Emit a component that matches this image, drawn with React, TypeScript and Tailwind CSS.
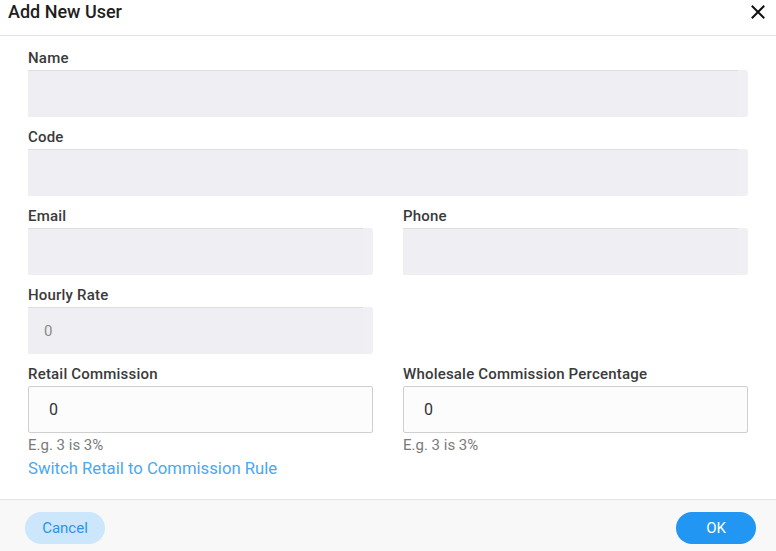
import React from "react";

function Label({ children }: { children: React.ReactNode }) {
  return (
    <div className="h-[20px] leading-[20px] text-[15px] tracking-[0.2px] font-medium text-[#3a3a3a] mb-[2px]">
      {children}
    </div>
  );
}

function Disabled({ value }: { value?: string }) {
  return (
    <div className="h-[47px] rounded-[3px] bg-[#f0f0f4] flex">
      <div className="w-[calc(100%-10px)] h-full border-t border-[#dedee2] bg-[#efeff3] flex items-center pl-[16px] text-[15px] text-[#8a8a8a]">
        {value}
      </div>
    </div>
  );
}

function Editable({ value }: { value: string }) {
  return (
    <div className="h-[47px] rounded-[2px] border border-[#cfcfcf] bg-[#fcfcfc] flex items-center pl-[20px] text-[16px] text-[#333333]">
      {value}
    </div>
  );
}

export default function App() {
  return (
    <div className="w-[776px] h-[551px] bg-white flex flex-col overflow-hidden font-['Roboto','Liberation_Sans',sans-serif]">
      <div className="h-[36px] shrink-0 border-b border-[#e3e3e3] flex items-start justify-between pl-[8px] pr-[11px]">
        <div className="leading-[24px] text-[18px] font-medium text-[#1e1e1e]">Add New User</div>
        <svg width="14" height="14" viewBox="0 0 14 14" className="mt-[5px]">
          <path d="M1.5 1.5 L12.5 12.5 M12.5 1.5 L1.5 12.5" stroke="#111" strokeWidth="2" strokeLinecap="square" />
        </svg>
      </div>

      <div className="flex-1 px-[28px] pt-[12px]">
        <div className="mb-[10px]">
          <Label>Name</Label>
          <Disabled />
        </div>
        <div className="mb-[10px]">
          <Label>Code</Label>
          <Disabled />
        </div>
        <div className="grid grid-cols-2 gap-x-[30px] mb-[10px]">
          <div>
            <Label>Email</Label>
            <Disabled />
          </div>
          <div>
            <Label>Phone</Label>
            <Disabled />
          </div>
        </div>
        <div className="grid grid-cols-2 gap-x-[30px] mb-[10px]">
          <div>
            <Label>Hourly Rate</Label>
            <Disabled value="0" />
          </div>
        </div>
        <div className="grid grid-cols-2 gap-x-[30px]">
          <div>
            <Label>Retail Commission</Label>
            <Editable value="0" />
            <div className="mt-[2px] h-[20px] leading-[20px] text-[15px] text-[#7a7a7a]">E.g. 3 is 3%</div>
            <div className="mt-[3px] leading-[22px] text-[16.7px] text-[#4aa7f2] cursor-pointer">
              Switch Retail to Commission Rule
            </div>
          </div>
          <div>
            <Label>Wholesale Commission Percentage</Label>
            <Editable value="0" />
            <div className="mt-[2px] h-[20px] leading-[20px] text-[15px] text-[#7a7a7a]">E.g. 3 is 3%</div>
          </div>
        </div>
      </div>

      <div className="h-[52px] shrink-0 border-t border-[#e3e3e3] bg-[#f8f8f8] flex items-start justify-between pl-[25px] pr-[20px] pt-[12px]">
        <button className="w-[80px] h-[32px] rounded-full bg-[#cce6fc] text-[#2b93ee] text-[15px]">Cancel</button>
        <button className="w-[80px] h-[32px] rounded-full bg-[#2196f3] text-white text-[15px]">OK</button>
      </div>
    </div>
  );
}
